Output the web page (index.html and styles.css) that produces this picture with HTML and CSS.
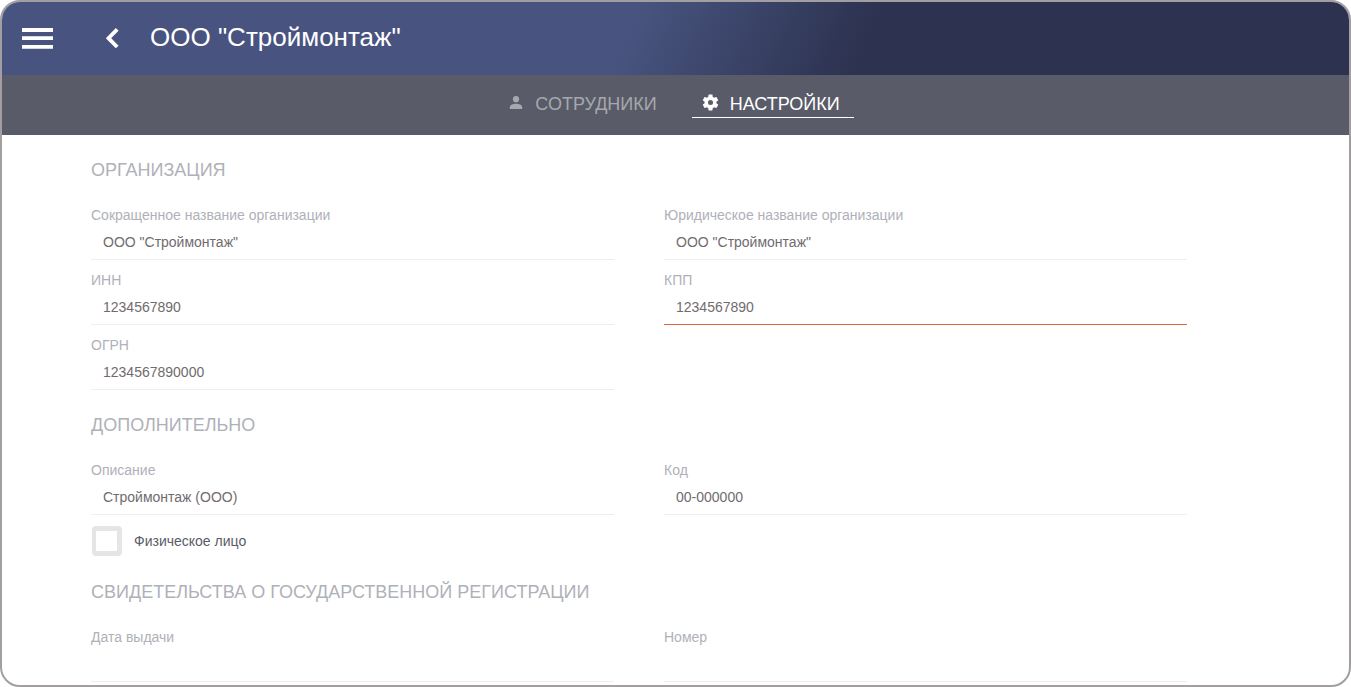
FILE: index.html
```html
<!DOCTYPE html>
<html lang="ru">
<head>
<meta charset="utf-8">
<title>ООО "Строймонтаж"</title>
<link rel="stylesheet" href="styles.css">
</head>
<body>
<div class="window">
  <header class="header">
    <svg class="menu-icon" width="31" height="21" viewBox="0 0 31 21"><path d="M0 0h31v4H0zM0 8.300h31v3.700H0zM0 17h31v3.700H0z" fill="#fff"/></svg>
    <svg class="back-icon" width="14" height="20" viewBox="0 0 14 20"><path d="M12.200 1.400 3.500 10.200l8.700 8.800" fill="none" stroke="#fff" stroke-width="3.800"/></svg>
    <h1 class="title">ООО "Строймонтаж"</h1>
  </header>
  <nav class="tabs">
    <a class="tab">
      <svg class="tab-icon" width="19" height="19" viewBox="0 0 19 19"><circle cx="10" cy="6.200" r="3.100" fill="currentColor"/><path d="M3.800 16v-1.800c0-2.500 3.600-3.500 6.200-3.500s6.200 1 6.200 3.500V16z" fill="currentColor"/></svg>
      <span>СОТРУДНИКИ</span>
    </a>
    <a class="tab tab-active">
      <svg class="tab-icon" width="19" height="19" viewBox="0 0 24 24"><path d="M19.430 12.980c.04-.32.07-.64.07-.98s-.03-.66-.07-.98l2.110-1.650c.19-.15.24-.42.12-.64l-2-3.460c-.12-.22-.39-.3-.61-.22l-2.490 1c-.52-.4-1.080-.73-1.690-.98l-.38-2.650C14.460 2.180 14.250 2 14 2h-4c-.25 0-.46.18-.49.42l-.38 2.650c-.61.25-1.170.59-1.690.98l-2.490-1c-.23-.09-.49 0-.61.22l-2 3.460c-.13.22-.07.49.12.64l2.110 1.650c-.04.32-.07.65-.07.98s.03.66.07.98l-2.110 1.650c-.19.15-.24.42-.12.64l2 3.460c.12.22.39.3.61.22l2.490-1c.52.4 1.080.73 1.690.98l.38 2.650c.03.24.24.42.49.42h4c.25 0 .46-.18.49-.42l.38-2.650c.61-.25 1.170-.59 1.690-.98l2.490 1c.23.09.49 0 .61-.22l2-3.460c.12-.22.07-.49-.12-.64l-2.110-1.650zM12 15.200a3.200 3.200 0 1 1 0-6.400 3.200 3.200 0 0 1 0 6.400z" fill="currentColor"/></svg>
      <span>НАСТРОЙКИ</span>
    </a>
  </nav>
  <main class="form">
    <h2 class="section-title">ОРГАНИЗАЦИЯ</h2>
    <div class="grid">
      <div class="field"><div class="label">Сокращенное название организации</div><div class="value">ООО "Строймонтаж"</div></div>
      <div class="field"><div class="label">Юридическое название организации</div><div class="value">ООО "Строймонтаж"</div></div>
      <div class="field"><div class="label">ИНН</div><div class="value">1234567890</div></div>
      <div class="field field-error"><div class="label">КПП</div><div class="value">1234567890</div></div>
      <div class="field"><div class="label">ОГРН</div><div class="value">1234567890000</div></div>
    </div>
    <h2 class="section-title">ДОПОЛНИТЕЛЬНО</h2>
    <div class="grid">
      <div class="field"><div class="label">Описание</div><div class="value">Строймонтаж (ООО)</div></div>
      <div class="field"><div class="label">Код</div><div class="value">00-000000</div></div>
    </div>
    <div class="check-row"><span class="checkbox"></span><span>Физическое лицо</span></div>
    <h2 class="section-title">СВИДЕТЕЛЬСТВА О ГОСУДАРСТВЕННОЙ РЕГИСТРАЦИИ</h2>
    <div class="grid">
      <div class="field"><div class="label">Дата выдачи</div><div class="value"></div></div>
      <div class="field"><div class="label">Номер</div><div class="value"></div></div>
    </div>
  </main>
</div>
</body>
</html>
```
FILE: styles.css
```css
* { box-sizing: border-box; }
body {
  margin: 0;
  background: #fff;
  font-family: "Liberation Sans", Arial, sans-serif;
  font-size: 14px;
}
.window {
  width: 1351px;
  height: 687px;
  border: 2px solid #a39e9f;
  border-radius: 20px;
  overflow: hidden;
  background: #fff;
}
.header {
  display: flex;
  height: 73px;
  padding-left: 20px;
  background: linear-gradient(115deg, #48547f 46.5%, #2c324f 64%);
}
.menu-icon { margin-top: 26px; }
.back-icon { margin: 26px 0 0 52px; }
.title {
  margin: 20px 0 0 31px;
  font-size: 26px;
  line-height: 30px;
  font-weight: 400;
  color: #fff;
}
.tabs {
  display: flex;
  justify-content: center;
  align-items: flex-start;
  gap: 21px;
  height: 60px;
  padding-top: 14px;
  background: #595c68;
}
.tab {
  display: flex;
  height: 29px;
  padding: 0 14px 0 9px;
  border-bottom: 1px solid transparent;
  font-size: 18px;
  line-height: 30px;
  color: #a7a8ad;
}
.tab-active { color: #fff; border-bottom-color: #fff; }
.tab-icon { margin: 4px 10px 0 0; }
.form { padding: 0 162px 0 89px; }
.section-title {
  margin: 0;
  height: 60px;
  padding-top: 24px;
  font-size: 18px;
  line-height: 22px;
  font-weight: 400;
  color: #afb1b8;
}
.grid {
  display: grid;
  grid-template-columns: 523px 523px;
  column-gap: 50px;
}
.field {
  height: 65px;
  padding-top: 12px;
  border-bottom: 1px solid #eee;
}
.field-error { border-bottom-color: #e2633f; }
.label { height: 27px; line-height: 16px; color: #afb1b8; }
.value { padding-left: 12px; line-height: 16px; color: #716b6e; }
.check-row {
  display: flex;
  align-items: center;
  gap: 12px;
  height: 42px;
  padding: 10px 0 0 1px;
  color: #595c68;
}
.checkbox {
  width: 30px;
  height: 30px;
  border: 5px solid #e5e5e5;
  border-left-width: 4px;
  border-radius: 4px;
}
```
